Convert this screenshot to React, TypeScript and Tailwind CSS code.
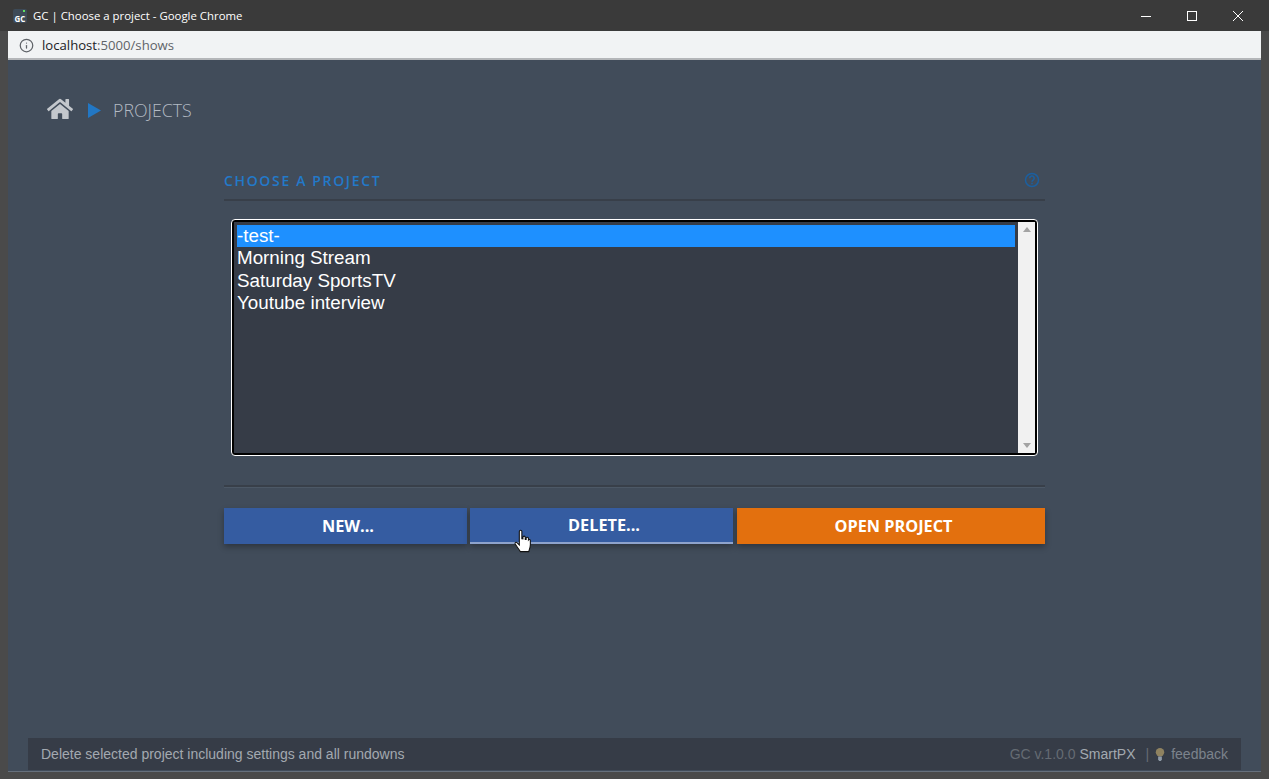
import { Info } from "lucide-react";
import { FaHome } from "react-icons/fa";

const projects = ["-test-", "Morning Stream", "Saturday SportsTV", "Youtube interview"];

function ProjectList() {
  return (
    <div className="mx-[7px] mt-[18px] flex h-[237px] rounded-[4px] border border-white bg-black p-[2px]">
      <div className="flex-1 bg-[#363c47] pl-[3px] pr-[3px] pt-[3px] font-['Liberation_Sans',sans-serif] text-[18.8px] leading-[22.5px] text-white">
        {projects.map((name, index) => (
          <div key={name} className={index === 0 ? "h-[22px] bg-[#1e90ff]" : "h-[22.5px]"}>
            {name}
          </div>
        ))}
      </div>
      <div className="flex w-[17px] flex-col items-center justify-between bg-[#f1f1f1] py-[5px]">
        <div className="h-0 w-0 border-x-[4px] border-b-[5px] border-x-transparent border-b-[#a3a3a3]" />
        <div className="h-0 w-0 border-x-[4px] border-t-[5px] border-x-transparent border-t-[#a3a3a3]" />
      </div>
    </div>
  );
}

function ActionButton({ label, className }: { label: string; className: string }) {
  return (
    <button
      className={`flex h-[36px] items-center justify-center pl-[5px] pt-px text-[16.3px] font-bold text-white shadow-[0_3px_6px_rgba(0,0,0,0.3)] ${className}`}
    >
      {label}
    </button>
  );
}

export default function App() {
  return (
    <div className="flex h-[779px] w-[1269px] flex-col overflow-hidden bg-[#4a4a4a] font-['Open_Sans',sans-serif]">
      <div className="flex h-[31px] items-center bg-[#3a3a3a] pl-[13px] text-[11.4px] text-white">
        <div className="relative flex h-[14px] w-[14px] items-end justify-center rounded-[2px] bg-[#3d4a57] text-[8px] font-bold leading-[9px]">
          GC
          <div className="absolute right-[2px] top-[1px] h-[2px] w-[2px] bg-[#5fe05f]" />
        </div>
        <span className="ml-[6px]">GC | Choose a project - Google Chrome</span>
        <div className="ml-auto mr-[26px] flex items-center gap-[36px]">
          <svg viewBox="0 0 10 10" className="h-[10px] w-[10px]" stroke="#fff" strokeWidth="1">
            <path d="M0 5.500h10" />
          </svg>
          <svg viewBox="0 0 10 10" className="h-[10px] w-[10px]" fill="none" stroke="#fff" strokeWidth="1">
            <rect x=".5" y=".5" width="9" height="9" />
          </svg>
          <svg viewBox="0 0 10 10" className="h-[10px] w-[10px]" stroke="#fff" strokeWidth="1">
            <path d="M0 0l10 10M10 0L0 10" />
          </svg>
        </div>
      </div>

      <div className="mx-[8px] flex flex-1 flex-col">
        <div className="flex h-[29px] items-center border-b-2 border-[#b4b6b9] bg-[#f1f3f4] pl-[11px] pt-[2px] text-[13.15px]">
          <Info size={15} strokeWidth={2} className="text-[#5f6368]" />
          <span className="ml-[8px] text-[#202124]">localhost</span>
          <span className="text-[#5f6368]">:5000/shows</span>
        </div>

        <div className="flex flex-1 flex-col bg-[#414c5a]">
          <div className="box-content flex h-[41px] items-center pl-[39px] pt-[30px]">
            <FaHome size={26} className="-mt-[4px] text-[#c3c7cc]" />
            <svg viewBox="0 0 13 15" className="ml-[15px] h-[15px] w-[13px]">
              <path d="M0 0l13 7.500L0 15z" fill="#2277c4" />
            </svg>
            <span className="ml-[12px] text-[17.8px] font-light text-[#b3bac3]">PROJECTS</span>
          </div>

          <div className="mx-[216px] mt-[30px] flex-1">
            <div className="flex h-[40px] items-center justify-between border-b-2 border-[#383f49] text-[14px] font-semibold tracking-[1.65px] text-[#2379c9]">
              <span>CHOOSE A PROJECT</span>
              <svg viewBox="0 0 16 16" className="mr-[5px] h-[16px] w-[16px] text-[#1c5f9e]" fill="none" stroke="currentColor">
                <circle cx="8" cy="8" r="6.500" strokeWidth="1.500" />
                <path d="M5.800 6.300a2.200 2.200 0 1 1 3.300 1.800c-.7.4-1.100.8-1.100 1.600M8 10.800v1.500" strokeWidth="1.600" />
              </svg>
            </div>

            <ProjectList />

            <div className="mt-[29px] h-[2px] border-b-2 border-[#383f49] shadow-[0_1px_0_#4c5866]" />

            <div className="mt-[21px] flex">
              <ActionButton label="NEW..." className="w-[243px] bg-[#355ca1]" />
              <div className="relative ml-[3px]">
                <ActionButton label="DELETE..." className="w-[263px] border-b-2 border-[#8ea3cc] bg-[#355ca1]" />
                <svg viewBox="0 0 16 22" className="absolute left-[44px] top-[21px] h-[24px] w-[17px]" fill="#fff" stroke="#111" strokeWidth="1">
                  <path d="M5 2a1.200 1.200 0 0 1 2.400 0v7l1 .1V7.500a1.100 1.100 0 0 1 2.200 0v2l.8.1V8.500a1.100 1.100 0 0 1 2.200 .2v1.300a1 1 0 0 1 1.800 .5v4c0 3-1.500 5.500-1.500 6.500H6c-1-2-4.500-6-5-7.500-.3-1.200 1-1.700 2-.8l2 2z" />
                </svg>
              </div>
              <ActionButton label="OPEN PROJECT" className="ml-[4px] w-[308px] bg-[#e3700e]" />
            </div>
          </div>

          <div className="mx-[20px] flex h-[32px] items-center justify-between bg-[#363c47] pl-[13px] pr-[13px] font-['Liberation_Sans',sans-serif] text-[14px]">
            <span className="text-[#a3a9b0]">Delete selected project including settings and all rundowns</span>
            <div className="flex items-center">
              <span className="text-[#656b73]">GC v.1.0.0</span>
              <span className="ml-[4px] text-[#a3a9b0]">SmartPX</span>
              <span className="ml-[10px] text-[#656b73]">|</span>
              <svg viewBox="0 0 10 16" className="ml-[6px] h-[15px] w-[10px]">
                <circle cx="5" cy="5.500" r="4.500" fill="#8f8260" />
                <path d="M3 10h4v3l-1 2H4l-1-2z" fill="#8f9aa6" />
              </svg>
              <span className="ml-[6px] text-[#7c838c]">feedback</span>
            </div>
          </div>
          <div className="mt-px h-px bg-[#66707c]" />
        </div>
        <div className="h-[7px]" />
      </div>
    </div>
  );
}
